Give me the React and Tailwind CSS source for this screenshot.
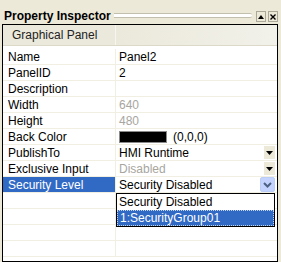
import React from 'react'

const rows = [
  { label: 'Name', value: 'Panel2' },
  { label: 'PanelID', value: '2' },
  { label: 'Description', value: '' },
  { label: 'Width', value: '640', dim: true },
  { label: 'Height', value: '480', dim: true },
  { label: 'Back Color', color: true },
  { label: 'PublishTo', value: 'HMI Runtime', combo: true },
  { label: 'Exclusive Input', value: 'Disabled', dim: true, combo: true },
  { label: 'Security Level', value: 'Security Disabled', selected: true },
  { label: '', value: '' },
  { label: '', value: '' },
  { label: '', value: '' },
  { label: '', value: '' },
]

function DownArrow() {
  return (
    <div className="w-[11px] h-[13px] shrink-0 bg-[#ece9d8] flex items-center justify-center">
      <svg width="7" height="4" viewBox="0 0 7 4">
        <path d="M0 0h7L3.5 4z" fill="#000" />
      </svg>
    </div>
  )
}

function Chevron() {
  return (
    <div className="w-[15px] h-[15px] shrink-0 rounded-[2px] bg-[#c3d3fd] border border-[#b9cdf6] flex items-center justify-center">
      <svg width="9" height="6" viewBox="0 0 9 6">
        <path d="M1 1l3.5 3.5L8 1" fill="none" stroke="#4d6185" strokeWidth="2" />
      </svg>
    </div>
  )
}

function Row({ row }) {
  return (
    <div className="flex h-[16px] border-b border-[#f1efe2]">
      <div
        className={
          row.selected
            ? 'w-[113px] shrink-0 grow-0 pl-[5px] flex items-center bg-[#316ac5] text-white border-r border-[#f1efe2]'
            : 'w-[113px] shrink-0 grow-0 pl-[5px] flex items-center text-black border-r border-[#f1efe2]'
        }
      >
        {row.label}
      </div>
      <div className="flex-1 flex items-center pl-[3px] pr-[2px] min-w-0">
        {row.color ? (
          <div className="flex items-center">
            <div className="w-[48px] h-[12px] bg-black border border-[#8a8a8a]" />
            <span className="ml-[6px]">(0,0,0)</span>
          </div>
        ) : (
          <div className={row.dim ? 'text-[#a7a6a0] flex-1 min-w-0' : 'text-black flex-1 min-w-0'}>{row.value}</div>
        )}
        {row.combo && <DownArrow />}
        {row.selected && <Chevron />}
      </div>
    </div>
  )
}

export default function App() {
  return (
    <div className="w-[281px] h-[262px] bg-[#ece9d8] overflow-hidden font-['Liberation_Sans',Arial,sans-serif] text-[12px] leading-none">
      {/* title bar */}
      <div className="h-[24px] flex items-end pb-[2px] pl-[4px] pr-[3px]">
        <span className="font-bold text-[12px] text-black">Property Inspector</span>
        <div className="flex-1 ml-[3px] mr-[4px] mb-[4px] h-[5px] border-y border-[#c2bfae] bg-white rounded-r-[2px]" />
        <div className="flex gap-[2px]">
          <div className="w-[10px] h-[11px] border border-[#aca899] bg-[#ece9d8] flex items-center justify-center">
            <svg width="6" height="4" viewBox="0 0 6 4">
              <path d="M0 4h6L3 0z" fill="#000" />
            </svg>
          </div>
          <div className="w-[10px] h-[11px] border border-[#aca899] bg-[#ece9d8] flex items-center justify-center">
            <svg width="6" height="6" viewBox="0 0 6 6">
              <path d="M0.5 0.5l5 5M5.5 0.5l-5 5" stroke="#000" strokeWidth="1.4" />
            </svg>
          </div>
        </div>
      </div>

      {/* property grid */}
      <div className="relative ml-[2px] mr-[3px] h-[238px] border border-black bg-white overflow-hidden">
        <div className="flex h-[21px] bg-[#ebe9db] border-b border-[#dcd9c8]">
          <div className="w-[113px] shrink-0 pl-[9px] flex items-center text-[#222] border-r border-[#f6f5ee]">
            Graphical Panel
          </div>
          <div className="flex-1 bg-gradient-to-r from-[#ebe9db] to-[#f2f1ea]" />
        </div>
        <div className="pt-[3px]">
          {rows.map((row, i) => (
            <Row key={i} row={row} />
          ))}
        </div>

        {/* open dropdown */}
        <div className="absolute left-[113px] top-[168px] w-[159px] border border-black bg-white">
          <div className="h-[16px] flex items-center pl-[2px] text-black">Security Disabled</div>
          <div className="h-[16px] flex items-center pl-[2px] bg-[#316ac5] text-white border border-dotted border-[#c7d6ef]">
            1:SecurityGroup01
          </div>
        </div>
      </div>
    </div>
  )
}
